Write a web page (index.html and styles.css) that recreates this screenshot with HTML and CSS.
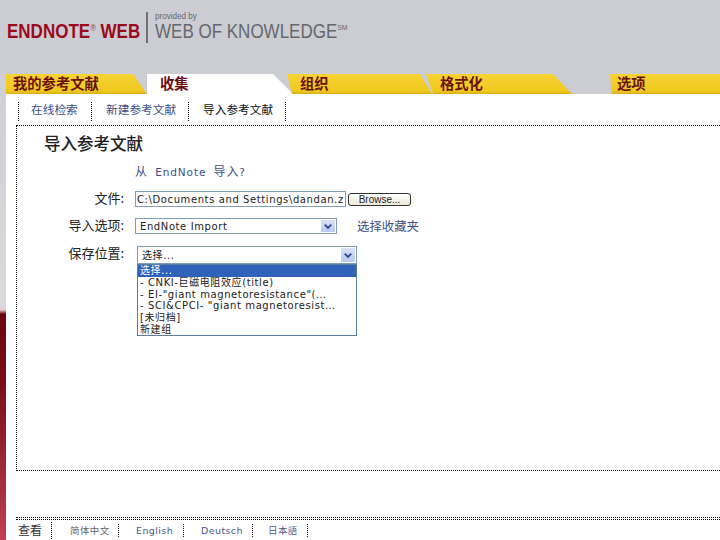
FILE: index.html
```html
<!DOCTYPE html>
<html lang="zh">
<head>
<meta charset="utf-8">
<title>EndNote Web</title>
<link rel="stylesheet" href="styles.css">
</head>
<body>
<div class="page">
  <div class="strip"></div>
  <div class="main">
    <header class="header">
      <div class="brand-slot"><div class="brand">ENDNOTE<sup class="reg">®</sup> WEB</div></div>
      <div class="divider"></div>
      <div class="wok">
        <div class="provided">provided by</div>
        <div class="wok-name">WEB OF KNOWLEDGE<sup class="sm">SM</sup></div>
      </div>
    </header>
    <nav class="tabs">
      <div class="tab tab-1">我的参考文献</div>
      <div class="tab tab-2 active">收集</div>
      <div class="tab tab-3">组织</div>
      <div class="tab tab-4">格式化</div>
      <div class="tab tab-5">选项</div>
    </nav>
    <div class="subnav">
      <a class="sub sub-1">在线检索</a>
      <a class="sub sub-2">新建参考文献</a>
      <a class="sub sub-3 current">导入参考文献</a>
    </div>
    <section class="box">
      <h1 class="title">导入参考文献</h1>
      <div class="help"><span class="cjk">从</span> EndNote <span class="cjk">导入</span>?</div>
      <div class="form">
        <div class="row row-file">
          <span class="label">文件:</span>
          <div class="field file">C:\Documents and Settings\dandan.z</div>
          <div class="browse">Browse...</div>
        </div>
        <div class="row row-opt">
          <span class="label">导入选项:</span>
          <div class="field combo opt">EndNote Import<span class="arrow"><svg width="15" height="13" viewBox="0 0 15 13"><path d="M4 4.5l3.5 3.5L11 4.5" fill="none" stroke="#2f4a8c" stroke-width="2"/></svg></span></div>
          <a class="link-fav">选择收藏夹</a>
        </div>
        <div class="row row-save">
          <span class="label">保存位置:</span>
          <div class="save-wrap">
            <div class="field combo save">选择...<span class="arrow"><svg width="15" height="13" viewBox="0 0 15 13"><path d="M4 4.5l3.5 3.5L11 4.5" fill="none" stroke="#2f4a8c" stroke-width="2"/></svg></span></div>
            <ul class="dropdown">
              <li class="selected">选择...</li>
              <li>- CNKI-巨磁电阻效应(title)</li>
              <li>- EI-"giant magnetoresistance"(…</li>
              <li>- SCI&amp;CPCI- "giant magnetoresist…</li>
              <li>[未归档]</li>
              <li>新建组</li>
            </ul>
          </div>
        </div>
      </div>
    </section>
    <footer class="footer">
      <div class="rule"></div>
      <div class="langs">
        <span class="view">查看</span>
        <a class="lang lang-1">简体中文</a>
        <a class="lang lang-2">English</a>
        <a class="lang lang-3">Deutsch</a>
        <a class="lang lang-4">日本語</a>
      </div>
    </footer>
  </div>
</div>
</body>
</html>
```
FILE: styles.css
```css
* { box-sizing: border-box; }
html, body { margin: 0; padding: 0; }
body {
  width: 720px;
  height: 540px;
  overflow: hidden;
  background: #fff;
  font-family: "DejaVu Sans", "Noto Sans CJK SC", sans-serif;
  color: #222;
}
.page { display: flex; width: 720px; height: 540px; }
.strip {
  width: 6px;
  flex: none;
  background: linear-gradient(#cbcdd3 0, #d9dadd 306px, #e8c8c8 310px, #6a0710 314px, #7a0c18 380px, #c0404f 540px);
}
.main { flex: 1; min-width: 0; display: flex; flex-direction: column; }

.header {
  margin-left: -6px;
  height: 74px;
  background: #cbcdd3;
  display: flex;
  align-items: flex-start;
  padding: 12px 0 0 7px;
}
.brand-slot { width: 139px; flex: none; }
.brand {
  display: inline-block;
  margin-top: 8px;
  font: bold 20px/22px "Liberation Sans", sans-serif;
  color: #9b0a1c;
  white-space: nowrap;
  transform: scaleX(.85);
  transform-origin: left center;
}
.reg { font-size: 9px; font-weight: normal; line-height: 0; vertical-align: 7px; color: #8c3a44; }
.divider { width: 2px; height: 31px; background: #6e7076; margin-right: 7px; flex: none; }
.wok {
  margin-top: -1px;
  color: #65676d;
  font-family: "Liberation Sans", sans-serif;
  transform: scaleX(.85);
  transform-origin: left top;
}
.provided { font-size: 9.5px; line-height: 9px; }
.wok-name { font-size: 20px; line-height: 23px; white-space: nowrap; }
.sm { font-size: 8px; line-height: 0; vertical-align: 8px; }

.tabs { height: 20px; display: flex; background: #cbcdd3; position: relative; }
.tab {
  height: 20px;
  flex: none;
  font: bold 14.3px/18px "Noto Sans CJK SC", sans-serif;
  color: #6a1208;
  background: linear-gradient(#f6d335, #f0c81e 85%, #d9ae18);
  white-space: nowrap;
}
.tab-1 { width: 141px; padding-left: 7px; clip-path: polygon(0 0, 127px 0, 100% 100%, 0 100%); }
.tab-2 { width: 146px; padding-left: 13px; background: #fff; clip-path: polygon(0 0, 126px 0, 100% 100%, 0 100%); color: #6a0c10; }
.tab-3 { width: 145px; margin-left: -6px; padding-left: 13px; clip-path: polygon(0 0, 133px 0, 100% 100%, 5px 100%); }
.tab-4 { width: 146px; margin-left: -6px; padding-left: 14px; clip-path: polygon(0 0, 127px 0, 100% 100%, 7px 100%); }
.tab-5 { width: 110px; margin-left: 38px; padding-left: 7px; clip-path: polygon(0 0, 100% 0, 100% 100%, 2px 100%); }

.subnav { height: 31px; display: flex; align-items: flex-start; padding: 8px 0 0 12px; }
.sub {
  height: 19px;
  font: 11.7px/14px "Noto Sans CJK SC", sans-serif;
  color: #3d4f86;
  border-left: 1px dotted #111;
  white-space: nowrap;
}
.sub-1 { width: 73px; padding-left: 12px; }
.sub-2 { width: 97px; padding-left: 14px; }
.sub-3 { width: 98px; padding-left: 14px; color: #111; border-right: 1px dotted #111; }

.box {
  height: 346px;
  margin-left: 10px;
  border: 1px dotted #111;
  border-right: 0;
  padding: 7px 0 0 27px;
}
.title { margin: 0; font: 500 16.5px/20px "Noto Sans CJK SC", sans-serif; color: #222; }
.help {
  margin: 11px 0 0 91px;
  font-size: 10.5px;
  line-height: 14px;
  letter-spacing: .9px;
  word-spacing: 3px;
  color: #3d4f86;
}
.cjk { font: 12px/14px "Noto Sans CJK SC", sans-serif; }
.form { margin-left: -27px; padding-top: 12px; display: flex; flex-direction: column; }
.row { display: flex; align-items: flex-start; }
.row-file { height: 27px; }
.row-opt { height: 28px; }
.label {
  width: 107px;
  margin-top: -1px;
  text-align: right;
  font: 13px/16px "Noto Sans CJK SC", sans-serif;
  color: #222;
  flex: none;
}
.field {
  margin-left: 11px;
  height: 16px;
  border: 1px solid #7f9db9;
  background: #fff;
  font-size: 10px;
  line-height: 16px;
  letter-spacing: .6px;
  color: #222;
  white-space: nowrap;
  overflow: hidden;
  flex: none;
}
.file { width: 211px; padding-left: 1px; }
.browse {
  width: 63px;
  height: 13px;
  margin: 2px 0 0 2px;
  border: 1px solid #333;
  border-radius: 3px;
  background: linear-gradient(#fff, #ece9d8);
  font: 10px/11px "Liberation Sans", sans-serif;
  text-align: center;
  color: #222;
}
.combo { position: relative; padding-left: 4px; }
.opt { width: 202px; }
.arrow {
  position: absolute;
  right: 0;
  top: 0;
  width: 16px;
  height: 14px;
  background: linear-gradient(#d8e2f8, #b8c8f0);
  border: 1px solid #fff;
  display: flex;
  align-items: center;
  justify-content: center;
}
.link-fav { margin: 0 0 0 20px; font: 12.4px/16px "Noto Sans CJK SC", sans-serif; color: #3d4f86; }
.save-wrap { position: relative; margin-left: 2px; }
.save { width: 220px; height: 18px; padding-left: 4px; line-height: 17px; }
.save .arrow { height: 16px; }
.dropdown {
  position: absolute;
  left: 11px;
  top: 18px;
  width: 220px;
  height: 72px;
  margin: 0;
  padding: 0;
  list-style: none;
  border: 1px solid #5b7da0;
  background: #fff;
  font-size: 10px;
  line-height: 11.8px;
  letter-spacing: .6px;
  color: #222;
  white-space: nowrap;
  overflow: hidden;
}
.dropdown li { padding-left: 2px; }
.dropdown .selected { background: #2f62b8; color: #fff; }

.footer { margin: 46px 0 0 10px; }
.rule { height: 3px; border-top: 1px dotted #111; border-bottom: 1px dotted #111; }
.langs { display: flex; align-items: flex-start; padding-top: 2px; white-space: nowrap; }
.view { width: 36px; padding-left: 2px; font: 12px/16px "Noto Sans CJK SC", sans-serif; color: #333; border-right: 1px dotted #111; height: 17px; }
.lang { font-size: 9.5px; letter-spacing: .4px; color: #4d5a8c; height: 13px; border-right: 1px dotted #111; margin-top: 2px; line-height: 13px; }
.lang-1 { width: 67px; padding-left: 18px; color: #666; }
.lang-2 { width: 65px; padding-left: 17px; }
.lang-3 { width: 69px; padding-left: 17px; }
.lang-4 { width: 55px; padding-left: 15px; }
```
